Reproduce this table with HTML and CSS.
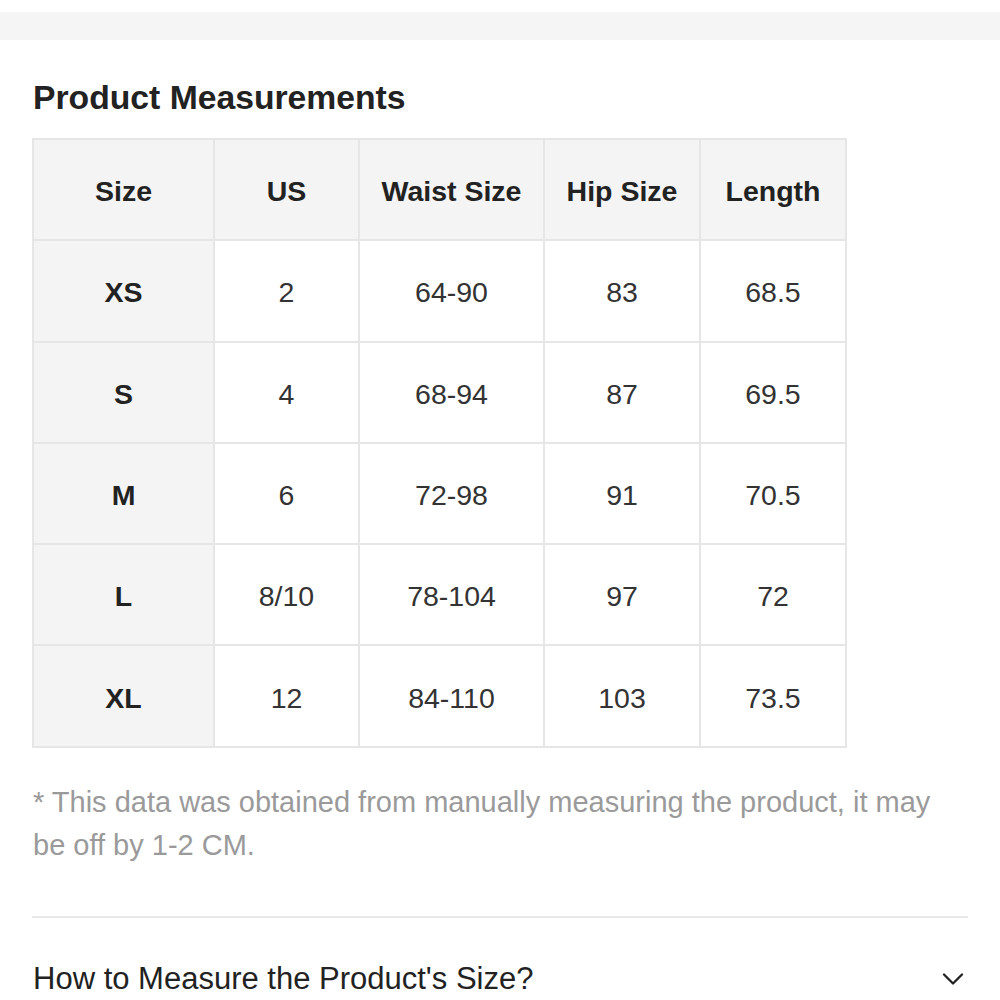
FILE: index.html
```html
<!DOCTYPE html>
<html lang="en">
<head>
<meta charset="utf-8">
<title>Product Measurements</title>
<link rel="stylesheet" href="styles.css">
</head>
<body>
<div class="topbar"></div>
<main class="content">
  <h2 class="title">Product Measurements</h2>
  <table class="sizes">
    <colgroup>
      <col class="c1"><col class="c2"><col class="c3"><col class="c4"><col class="c5">
    </colgroup>
    <thead>
      <tr><th>Size</th><th>US</th><th>Waist Size</th><th>Hip Size</th><th>Length</th></tr>
    </thead>
    <tbody>
      <tr><th>XS</th><td>2</td><td>64-90</td><td>83</td><td>68.5</td></tr>
      <tr><th>S</th><td>4</td><td>68-94</td><td>87</td><td>69.5</td></tr>
      <tr><th>M</th><td>6</td><td>72-98</td><td>91</td><td>70.5</td></tr>
      <tr><th>L</th><td>8/10</td><td>78-104</td><td>97</td><td>72</td></tr>
      <tr><th>XL</th><td>12</td><td>84-110</td><td>103</td><td>73.5</td></tr>
    </tbody>
  </table>
  <p class="note">* This data was obtained from manually measuring the product, it may be off by 1-2 CM.</p>
  <hr class="divider">
  <div class="accordion">
    <span class="acc-title">How to Measure the Product's Size?</span>
    <svg class="chev" width="22" height="14" viewBox="0 0 22 14" aria-hidden="true"><polyline points="2,2.5 11,11.5 20,2.5" fill="none" stroke="#222" stroke-width="2.3" stroke-linecap="round" stroke-linejoin="round"/></svg>
  </div>
</main>
</body>
</html>
```

FILE: styles.css
```css
html, body {
  margin: 0;
  padding: 0;
  background: #ffffff;
}
body {
  font-family: "Liberation Sans", Arial, Helvetica, sans-serif;
  color: #222;
}
.topbar {
  margin-top: 12px;
  height: 28px;
  background: #f5f5f5;
}
.content {
  padding: 0 32px;
}
.title {
  margin: 37px 0 21px 1px;
  font-size: 33.7px;
  line-height: 40px;
  font-weight: bold;
  color: #222;
}
.sizes {
  border-collapse: collapse;
  table-layout: fixed;
  width: 811px;
  margin-left: 0;
}
.c1 { width: 181px; }
.c2 { width: 145px; }
.c3 { width: 185px; }
.c4 { width: 156px; }
.c5 { width: 146px; }
.sizes th,
.sizes td {
  border: 2px solid #e6e6e6;
  height: 101.3px;
  padding: 4px 0 0 0;
  text-align: center;
  vertical-align: middle;
  font-size: 28.5px;
  box-sizing: border-box;
}
.sizes th {
  background: #f4f4f4;
  font-weight: bold;
  color: #222;
}
.sizes td {
  background: #fff;
  color: #333;
  font-weight: normal;
}
.note {
  margin: 33px 0 0 1px;
  max-width: 930px;
  font-size: 29px;
  line-height: 43px;
  color: #9a9a9a;
}
.divider {
  margin: 49px 0 0 0;
  border: 0;
  height: 2px;
  background: #e8e8e8;
}
.accordion {
  margin-top: 41px;
  display: flex;
  align-items: center;
  justify-content: space-between;
  height: 40px;
}
.acc-title {
  font-size: 31px;
  line-height: 40px;
  color: #222;
  margin-left: 1px;
}
.chev {
  margin-right: 4px;
  display: block;
}
```
